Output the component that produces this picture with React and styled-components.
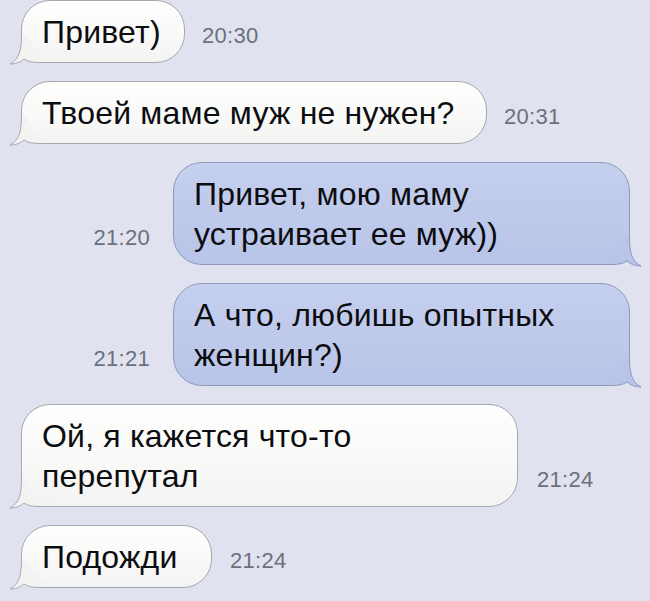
import React from "react";
import styled, { createGlobalStyle, css } from "styled-components";

const GlobalStyle = createGlobalStyle`
  html, body {
    margin: 0;
    padding: 0;
    background: #e0e3ef;
  }
  body {
    font-family: "Liberation Sans", Arial, Helvetica, sans-serif;
    -webkit-font-smoothing: antialiased;
  }
`;

const Thread = styled.div`
  width: 650px;
  height: 601px;
  overflow: hidden;
  box-sizing: border-box;
  background: #e0e3ef;
  display: flex;
  flex-direction: column;
  gap: 18px;
  padding: 0 20px 0 21px;
`;

const Row = styled.div`
  display: flex;
  align-items: last baseline;
  justify-content: ${(p) => (p.$outgoing ? "flex-end" : "flex-start")};
  gap: ${(p) => p.$gap || 18}px;
`;

const Bubble = styled.div`
  position: relative;
  box-sizing: border-box;
  width: ${(p) => p.$width}px;
  padding: 11px 16px 10px 20px;
  border-radius: 29px;
  font-size: 32px;
  line-height: 40px;
  color: #0c0d10;
  letter-spacing: 0.2px;
  ${(p) =>
    p.$outgoing
      ? css`
          background: linear-gradient(180deg, #c5cfee 0%, #bec9eb 55%, #b9c5e8 100%);
          border: 1px solid #8e99ba;
        `
      : css`
          background: linear-gradient(180deg, #fefefd 0%, #f9f9f7 55%, #f3f3f1 100%);
          border: 1px solid #a6a8b0;
        `}
`;

const BubbleText = styled.span`
  position: relative;
  z-index: 1;
  display: block;
  white-space: nowrap;
`;

const TailSvg = styled.svg`
  position: absolute;
  bottom: -3px;
  width: 44px;
  height: 36px;
  z-index: 0;
  pointer-events: none;
  ${(p) =>
    p.$outgoing
      ? css`
          right: -13px;
          transform: scaleX(-1);
        `
      : css`
          left: -13px;
        `}
`;

const Time = styled.span`
  font-size: 22px;
  line-height: 40px;
  color: #6c707b;
  letter-spacing: 0.3px;
  white-space: nowrap;
`;

function Tail({ outgoing }) {
  const fill = outgoing ? "#b9c5e8" : "#f3f3f1";
  const stroke = outgoing ? "#8e99ba" : "#a6a8b0";
  return (
    <TailSvg $outgoing={outgoing} viewBox="0 0 44 36" aria-hidden="true">
      <path
        d="M12.5,5 C12.5,21 10.5,30 1,35 C8,35 12,32.5 15,30 C19,33 25,33.5 32,33.5 L42,33.5 L42,31 L26,20 L15,5 Z"
        fill={fill}
      />
      <path
        d="M12.5,5 C12.5,21 10.5,30 1,35 C8,35 12,32.5 15,30 C19,33 25,33.5 32,33.5 L42,33.5"
        fill="none"
        stroke={stroke}
        strokeWidth="1"
      />
    </TailSvg>
  );
}

function Message({ text, time, width, outgoing, gap }) {
  const bubble = (
    <Bubble $width={width} $outgoing={outgoing}>
      <Tail outgoing={outgoing} />
      <BubbleText>{text}</BubbleText>
    </Bubble>
  );
  const stamp = <Time>{time}</Time>;
  return (
    <Row $outgoing={outgoing} $gap={gap}>
      {outgoing ? (
        <>
          {stamp}
          {bubble}
        </>
      ) : (
        <>
          {bubble}
          {stamp}
        </>
      )}
    </Row>
  );
}

const messages = [
  { text: "Привет)", time: "20:30", width: 164, gap: 17 },
  { text: "Твоей маме муж не нужен?", time: "20:31", width: 466, gap: 17 },
  {
    text: (
      <>
        Привет, мою маму
        <br />
        устраивает ее муж))
      </>
    ),
    time: "21:20",
    width: 457,
    outgoing: true,
    gap: 23,
  },
  {
    text: (
      <>
        А что, любишь опытных
        <br />
        женщин?)
      </>
    ),
    time: "21:21",
    width: 457,
    outgoing: true,
    gap: 23,
  },
  {
    text: (
      <>
        Ой, я кажется что-то
        <br />
        перепутал
      </>
    ),
    time: "21:24",
    width: 497,
    gap: 19,
  },
  { text: "Подожди", time: "21:24", width: 191, gap: 18 },
];

export default function App() {
  return (
    <>
      <GlobalStyle />
      <Thread>
        {messages.map((m, i) => (
          <Message key={i} {...m} />
        ))}
      </Thread>
    </>
  );
}
